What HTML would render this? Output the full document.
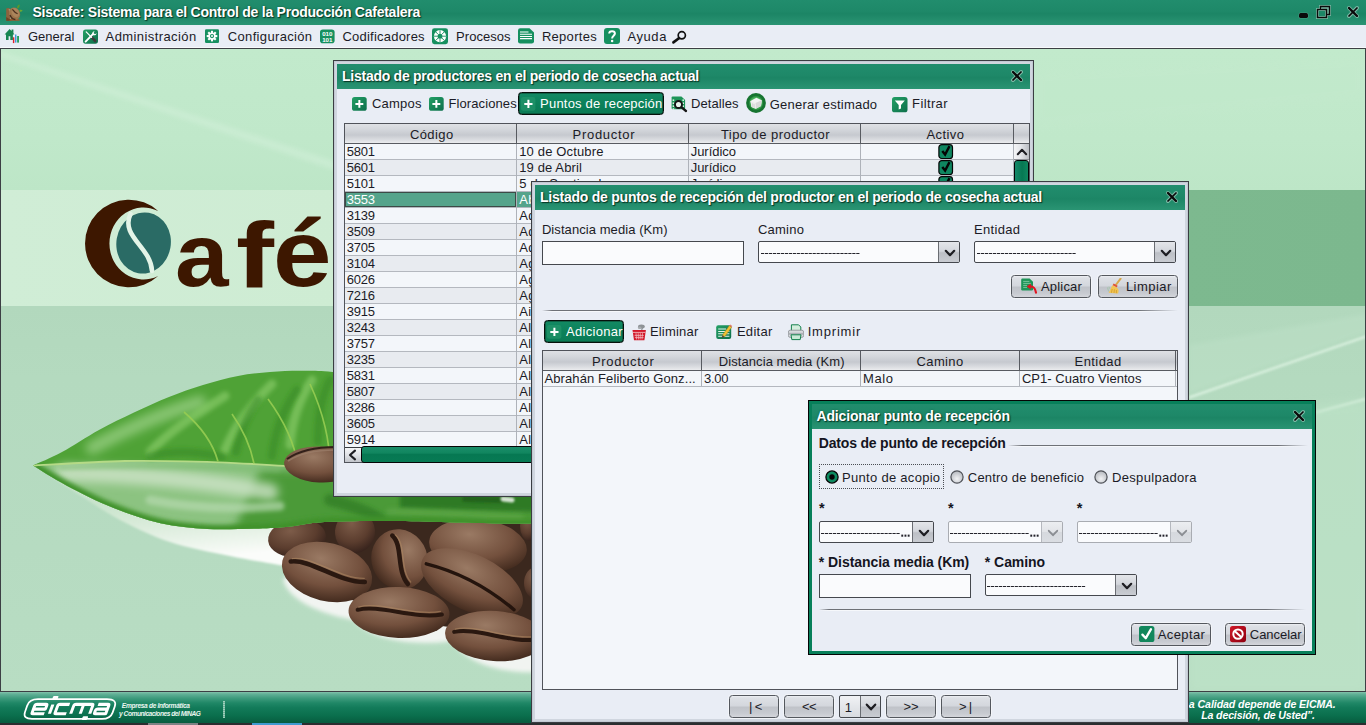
<!DOCTYPE html><html><head><meta charset="utf-8"><title>Siscafe</title><style>
*{box-sizing:border-box;margin:0;padding:0}
html,body{width:1366px;height:725px;overflow:hidden;background:#bfe6c8;font-family:"Liberation Sans",sans-serif}
.t{position:absolute;white-space:pre;line-height:1;font-family:"Liberation Sans",sans-serif}
.abs{position:absolute}
.tb{background:linear-gradient(#218d6d 0%,#1e8868 45%,#1c8565 55%,#2a9473 100%)}
.btn{position:absolute;border:1px solid #54585e;border-radius:3.5px;background:linear-gradient(#eef0f3 0,#dde0e5 9%,#d4d7dd 46%,#c0c3c9 54%,#c7cad0 82%,#d4d6db 100%);box-shadow:0 0 0 1px rgba(255,255,255,.45)}
.hdr{position:absolute;background:linear-gradient(#dfe1e5 0%,#d3d6db 30%,#c6c9cf 58%,#dcdee2 85%,#ebecee 100%)}
.cmb{position:absolute;border:1px solid #45484e;background:#fafbfd;border-radius:2px;overflow:hidden}
.cmb .ar{position:absolute;right:0;top:0;bottom:0;width:21px;border-left:1px solid #6a6d73;background:linear-gradient(#e4e6ea 0%,#d3d6dc 46%,#bcbfc5 54%,#c9ccd2 100%)}
.cmb.dis{border-color:#a9acb2}
.cmb.dis .ar{border-left-color:#b5b8be;background:linear-gradient(#eceef1 0%,#e2e4e8 48%,#d6d9de 52%,#dadde2 100%)}
.inp{position:absolute;border:1px solid #45484e;background:#fafbfd}
</style></head><body>
<div class="abs" style="left:0;top:49px;width:1366px;height:643px;overflow:hidden;background:linear-gradient(#c2eacc 0px,#c0e8ca 90px,#bde6c7 141px,#bbe4c5 141px,#bbe4c5 257px,#b2d8bd 257px,#b4dabf 330px,#b6dbc1 500px,#b8ddc3 643px)">
<div class="abs" style="left:0;top:141px;width:1366px;height:116px;background:linear-gradient(90deg,#d0edd6 0,#ceecd3 340px,#7db98f 1180px,#7cb88e 100%)"></div>
<svg class="abs" style="left:0;top:0" width="1366" height="643" viewBox="0 49 1366 643"><defs><linearGradient id="lf" x1="0" y1="0" x2="0" y2="1"><stop offset="0" stop-color="#2f7d25"/><stop offset=".45" stop-color="#4d9c38"/><stop offset=".55" stop-color="#86c072"/><stop offset="1" stop-color="#4f9b3c"/></linearGradient><linearGradient id="lf2" x1="0" y1="0" x2="1" y2="0"><stop offset="0" stop-color="#8cc47c"/><stop offset=".5" stop-color="#5aa546"/><stop offset="1" stop-color="#2f7a26"/></linearGradient><filter id="bl" filterUnits="userSpaceOnUse" x="0" y="49" width="1366" height="643"><feGaussianBlur stdDeviation="5"/></filter><filter id="bl2" filterUnits="userSpaceOnUse" x="0" y="49" width="1366" height="643"><feGaussianBlur stdDeviation="2.2"/></filter><filter id="bl1" filterUnits="userSpaceOnUse" x="0" y="49" width="1366" height="643"><feGaussianBlur stdDeviation="1"/></filter></defs><path d="M0,51 L340,163 L340,172 L0,57Z" fill="#d3f0da" opacity=".5" filter="url(#bl2)"/><path d="M1034,70 L1366,55 L1366,100 L1034,130Z" fill="#c4e9cd" opacity=".3" filter="url(#bl)"/><path d="M1189,396 L1366,335 L1366,338 L1189,399Z" fill="#dcf2e1" opacity=".85" filter="url(#bl1)"/><path d="M1189,345 L1366,314 L1366,333 L1189,393Z" fill="#bde0c7" opacity=".5" filter="url(#bl2)"/><path d="M1316,411 L1366,397.5 L1366,400.5 L1316,414Z" fill="#dcf2e1" opacity=".75" filter="url(#bl1)"/><path d="M1189,420 L1366,400 L1366,692 L1189,692Z" fill="#bfe5c9" opacity=".5" filter="url(#bl)"/>
<g><path d="M158.2,211 A43.8,43.8 0 1 0 158.2,276 A34.1,36 0 1 1 158.2,211Z" fill="#3d1700"/><ellipse cx="143.6" cy="243" rx="27.2" ry="30.6" fill="#2a6b65" transform="rotate(10 143.6 243)"/><path d="M130.5,214 C120,236 151,247 152,271" fill="none" stroke="#e3f4e7" stroke-width="4.6" stroke-linecap="round"/></g>
<defs><linearGradient id="shg" x1="0" y1="0" x2=".25" y2="1"><stop offset=".35" stop-color="#dfeeda" stop-opacity=".5"/><stop offset="1" stop-color="#fbfcfa"/></linearGradient></defs>
<path d="M50.0,476.0 C54.2,478.7 63.3,484.7 75.0,492.0 C86.7,499.3 104.2,511.7 120.0,520.0 C135.8,528.3 151.7,536.0 170.0,542.0 C188.3,548.0 210.8,552.0 230.0,556.0 C249.2,560.0 275.8,564.3 285.0,566.0 L300,566 L300,520 L120,500Z" fill="url(#shg)" filter="url(#bl1)"/>
<path d="M283,580 C290,604 330,616 354,620 C372,642 420,646 452,641 C470,668 510,674 545,672 L545,560 L300,560Z" fill="#f5f6f4" opacity=".95" filter="url(#bl2)"/>
<path d="M290,522 L545,516 L545,640 L470,630 L400,620 L340,595 L300,575 L285,548Z" fill="#3b281e"/>
<g transform="translate(297,538) rotate(-6)"><defs><radialGradient id="b297538" cx=".4" cy=".3" r=".75"><stop offset="0" stop-color="#7d5c49"/><stop offset=".6" stop-color="#5b3d2e"/><stop offset="1" stop-color="#33201a"/></radialGradient></defs><ellipse rx="29" ry="19" fill="url(#b297538)"/></g>
<g transform="translate(355,532) rotate(5)"><defs><radialGradient id="b355532" cx=".4" cy=".3" r=".75"><stop offset="0" stop-color="#7d5c49"/><stop offset=".6" stop-color="#5b3d2e"/><stop offset="1" stop-color="#33201a"/></radialGradient></defs><ellipse rx="20" ry="21" fill="url(#b355532)"/></g>
<g transform="translate(478,546) rotate(6)"><defs><radialGradient id="b478546" cx=".4" cy=".3" r=".75"><stop offset="0" stop-color="#9a7a64"/><stop offset=".6" stop-color="#73503d"/><stop offset="1" stop-color="#3e271b"/></radialGradient></defs><ellipse rx="49" ry="27" fill="url(#b478546)"/></g>
<g transform="translate(529,526) rotate(0)"><defs><radialGradient id="b529526" cx=".4" cy=".3" r=".75"><stop offset="0" stop-color="#7d5c49"/><stop offset=".6" stop-color="#5b3d2e"/><stop offset="1" stop-color="#33201a"/></radialGradient></defs><ellipse rx="9" ry="15" fill="url(#b529526)"/></g>
<g transform="translate(536,583) rotate(0)"><defs><radialGradient id="b536583" cx=".4" cy=".3" r=".75"><stop offset="0" stop-color="#7d5c49"/><stop offset=".6" stop-color="#5b3d2e"/><stop offset="1" stop-color="#33201a"/></radialGradient></defs><ellipse rx="12" ry="16" fill="url(#b536583)"/></g>
<defs><clipPath id="lc"><path d="M33.0,465.6 C37.8,463.3 51.0,457.9 62.0,452.0 C73.0,446.1 87.0,436.6 99.0,430.0 C111.0,423.4 122.3,418.0 134.0,412.5 C145.7,407.0 157.5,401.6 169.0,397.0 C180.5,392.4 191.5,388.5 203.0,385.0 C214.5,381.5 226.8,378.2 238.0,376.0 C249.2,373.8 259.7,372.9 270.0,372.0 C280.3,371.1 289.6,370.8 300.0,370.8 C310.4,370.8 315.8,370.5 332.5,372.0 C349.2,373.5 364.6,375.3 400.0,380.0 C435.4,384.7 520.8,396.7 545.0,400.0 L545,523  C537.7,523.1 526.3,523.8 501.0,523.5 C475.7,523.2 422.4,521.2 393.0,521.0 C363.6,520.8 342.3,521.0 324.5,522.0 C306.7,523.0 297.8,525.9 286.0,527.0 C274.2,528.1 267.1,528.2 254.0,528.5 C240.9,528.8 223.0,529.9 207.4,529.0 C191.8,528.1 176.1,526.7 160.5,523.2 C144.9,519.7 129.3,514.2 113.7,508.0 C98.1,501.8 80.2,492.8 66.8,485.7 C53.3,478.6 38.6,469.0 33.0,465.6Z"/></clipPath></defs>
<path d="M33.0,465.6 C37.8,463.3 51.0,457.9 62.0,452.0 C73.0,446.1 87.0,436.6 99.0,430.0 C111.0,423.4 122.3,418.0 134.0,412.5 C145.7,407.0 157.5,401.6 169.0,397.0 C180.5,392.4 191.5,388.5 203.0,385.0 C214.5,381.5 226.8,378.2 238.0,376.0 C249.2,373.8 259.7,372.9 270.0,372.0 C280.3,371.1 289.6,370.8 300.0,370.8 C310.4,370.8 315.8,370.5 332.5,372.0 C349.2,373.5 364.6,375.3 400.0,380.0 C435.4,384.7 520.8,396.7 545.0,400.0 L545,523  C537.7,523.1 526.3,523.8 501.0,523.5 C475.7,523.2 422.4,521.2 393.0,521.0 C363.6,520.8 342.3,521.0 324.5,522.0 C306.7,523.0 297.8,525.9 286.0,527.0 C274.2,528.1 267.1,528.2 254.0,528.5 C240.9,528.8 223.0,529.9 207.4,529.0 C191.8,528.1 176.1,526.7 160.5,523.2 C144.9,519.7 129.3,514.2 113.7,508.0 C98.1,501.8 80.2,492.8 66.8,485.7 C53.3,478.6 38.6,469.0 33.0,465.6Z" fill="#4fa236"/>
<g clip-path="url(#lc)"><path d="M33.0,465.6 C48.3,464.8 94.0,461.6 125.0,461.0 C156.0,460.4 192.3,461.5 219.0,462.3 C245.7,463.1 254.8,464.5 285.0,465.8 C315.2,467.1 356.7,470.0 400.0,470.0 C443.3,470.0 520.8,466.7 545.0,466.0 L545,540 L30,540Z" fill="#8cc381"/><path d="M260,470 L545,470 L545,540 L230,540Z" fill="#4c9a38" filter="url(#bl)"/><path d="M400,490 L545,490 L545,512 L400,508Z" fill="#2b7521" opacity=".85" filter="url(#bl2)"/><path d="M64,473 C130,474 200,480 270,492" stroke="#cfe5cb" stroke-width="17" stroke-opacity=".8" fill="none" stroke-linecap="round" filter="url(#bl)"/><path d="M150,500 C190,508 230,510 280,506" stroke="#b5d9ae" stroke-width="9" stroke-opacity=".7" fill="none" stroke-linecap="round" filter="url(#bl2)"/><path d="M60,468 C120,466 200,466 280,470" stroke="#7dba6f" stroke-width="4" stroke-opacity=".6" fill="none" filter="url(#bl2)"/><path d="M330,500 C350,505 370,512 380,520" stroke="#2c7a22" stroke-width="12" stroke-opacity=".7" fill="none" stroke-linecap="round" filter="url(#bl2)"/><path d="M390,512 C430,513 470,515 520,518" stroke="#5fa848" stroke-width="7" stroke-opacity=".7" fill="none" stroke-linecap="round" filter="url(#bl2)"/><path d="M465,499 L500,500" stroke="#1f5f1a" stroke-width="6" stroke-opacity=".8" fill="none" stroke-linecap="round" filter="url(#bl1)"/><path d="M503,499 L512,500" stroke="#e8efe6" stroke-width="5" stroke-opacity=".9" fill="none" stroke-linecap="round" filter="url(#bl1)"/><path d="M545.0,523.0 C537.7,523.1 526.3,523.8 501.0,523.5 C475.7,523.2 422.4,521.2 393.0,521.0 C363.6,520.8 342.3,521.0 324.5,522.0 C306.7,523.0 297.8,525.9 286.0,527.0 C274.2,528.1 267.1,528.2 254.0,528.5 C240.9,528.8 223.0,529.9 207.4,529.0 C191.8,528.1 176.1,526.7 160.5,523.2 C144.9,519.7 129.3,514.2 113.7,508.0 C98.1,501.8 80.2,492.8 66.8,485.7 C53.3,478.6 38.6,469.0 33.0,465.6" stroke="#3f922b" stroke-width="9" fill="none" filter="url(#bl2)"/><path d="M92,448 C125,430 160,414 200,402" stroke="#a7d893" stroke-width="13" stroke-opacity=".65" fill="none" stroke-linecap="round" filter="url(#bl)"/><path d="M150,452 C170,430 200,412 225,396 M225,450 C235,425 255,400 272,384 M290,445 C292,420 300,398 312,380" stroke="#8fd06e" stroke-width="9" stroke-opacity=".6" fill="none" stroke-linecap="round" filter="url(#bl2)"/><path d="M150,456 C175,450 200,452 222,457 M236,452 C240,432 248,414 258,400 M272,456 C275,432 284,408 297,390 M318,442 C318,420 321,396 330,380" stroke="#2f861f" stroke-width="8" stroke-opacity=".5" fill="none" stroke-linecap="round" filter="url(#bl2)"/><path d="M33.0,465.6 C48.3,464.8 94.0,461.6 125.0,461.0 C156.0,460.4 192.3,461.5 219.0,462.3 C245.7,463.1 254.8,464.5 285.0,465.8 C315.2,467.1 356.7,470.0 400.0,470.0 C443.3,470.0 520.8,466.7 545.0,466.0" stroke="#b5da86" stroke-width="1.8" fill="none"/><path d="M218,461.5 C212,440 198,424 184,412 M254,463.5 C250,444 242,428 232,414 M298,466 C294,440 282,418 268,399 M330,468 C330,440 322,410 310,384" stroke="#96cc52" stroke-width="1.7" fill="none" opacity=".9"/></g>
<g transform="translate(320,464.5) rotate(3)"><defs><radialGradient id="b320464" cx=".4" cy=".3" r=".75"><stop offset="0" stop-color="#9a7a64"/><stop offset=".6" stop-color="#73503d"/><stop offset="1" stop-color="#3e271b"/></radialGradient></defs><ellipse rx="36" ry="18" fill="url(#b320464)"/></g>
<path d="M287,459 C300,450 320,446.5 340,447" stroke="#33201a" stroke-width="2" fill="none"/>
<path d="M288,461 C300,453 320,449.5 340,450" stroke="#9a7c68" stroke-width="1.6" fill="none" opacity=".8"/>
<g transform="translate(327,572) rotate(14)"><defs><radialGradient id="b327572" cx=".4" cy=".3" r=".75"><stop offset="0" stop-color="#9a7a64"/><stop offset=".6" stop-color="#73503d"/><stop offset="1" stop-color="#3e271b"/></radialGradient></defs><ellipse rx="46" ry="29" fill="url(#b327572)"/><path d="M-37.72,-1.4500000000000002 C-18.400000000000002,-8.7 13.799999999999999,7.25 39.1,0.58" fill="none" stroke="#2a1810" stroke-width="4.6" stroke-linecap="round"/><path d="M-36.800000000000004,-4.64 C-18.400000000000002,-12.18 13.799999999999999,3.48 37.72,-2.9000000000000004" fill="none" stroke="#b08a62" stroke-opacity=".55" stroke-width="1.3" stroke-linecap="round"/></g>
<g transform="translate(399.5,559.5) rotate(70)"><defs><radialGradient id="b399559" cx=".4" cy=".3" r=".75"><stop offset="0" stop-color="#9a7a64"/><stop offset=".6" stop-color="#73503d"/><stop offset="1" stop-color="#3e271b"/></radialGradient></defs><ellipse rx="30.5" ry="28" fill="url(#b399559)"/><path d="M-25.009999999999998,-1.4000000000000001 C-12.200000000000001,-8.4 9.15,7.0 25.925,0.56" fill="none" stroke="#2a1810" stroke-width="4.5" stroke-linecap="round"/><path d="M-24.400000000000002,-4.48 C-12.200000000000001,-11.76 9.15,3.36 25.009999999999998,-2.8000000000000003" fill="none" stroke="#b08a62" stroke-opacity=".55" stroke-width="1.3" stroke-linecap="round"/></g>
<g transform="translate(472,583) rotate(26)"><defs><radialGradient id="b472583" cx=".4" cy=".3" r=".75"><stop offset="0" stop-color="#9a7a64"/><stop offset=".6" stop-color="#73503d"/><stop offset="1" stop-color="#3e271b"/></radialGradient></defs><ellipse rx="55" ry="28" fill="url(#b472583)"/><path d="M-49.5,2.8000000000000003 C-16.5,-4.2 16.5,-2.8000000000000003 49.5,5.6000000000000005" fill="none" stroke="#24140d" stroke-width="3.4" stroke-linecap="round"/></g>
<g transform="translate(399,612.5) rotate(2)"><defs><radialGradient id="b399612" cx=".4" cy=".3" r=".75"><stop offset="0" stop-color="#9a7a64"/><stop offset=".6" stop-color="#73503d"/><stop offset="1" stop-color="#3e271b"/></radialGradient></defs><ellipse rx="50.5" ry="25.5" fill="url(#b399612)"/><path d="M-41.41,-1.2750000000000001 C-20.200000000000003,-7.6499999999999995 15.149999999999999,6.375 42.925,0.51" fill="none" stroke="#2a1810" stroke-width="4.1" stroke-linecap="round"/><path d="M-40.400000000000006,-4.08 C-20.200000000000003,-10.709999999999999 15.149999999999999,3.06 41.41,-2.5500000000000003" fill="none" stroke="#b08a62" stroke-opacity=".55" stroke-width="1.3" stroke-linecap="round"/></g>
<g transform="translate(495,636) rotate(4)"><defs><radialGradient id="b495636" cx=".4" cy=".3" r=".75"><stop offset="0" stop-color="#9a7a64"/><stop offset=".6" stop-color="#73503d"/><stop offset="1" stop-color="#3e271b"/></radialGradient></defs><ellipse rx="50" ry="25" fill="url(#b495636)"/><path d="M-41.0,-1.25 C-20.0,-7.5 15.0,6.25 42.5,0.5" fill="none" stroke="#2a1810" stroke-width="4.0" stroke-linecap="round"/><path d="M-40.0,-4.0 C-20.0,-10.5 15.0,3.0 41.0,-2.5" fill="none" stroke="#b08a62" stroke-opacity=".55" stroke-width="1.3" stroke-linecap="round"/></g>
</svg>
<div class="abs" style="left:174.5px;top:162.6px;font-family:'Liberation Sans',sans-serif;font-weight:700;font-size:90px;line-height:1;color:#3d1700;white-space:pre;transform-origin:0 0;transform:scale(1.07,0.98)">a</div>
<div class="abs" style="left:235.5px;top:159.6px;font-family:'Liberation Sans',sans-serif;font-weight:700;font-size:90px;line-height:1;color:#3d1700;white-space:pre;transform-origin:0 0;transform:scale(1.27,1.02)">f</div>
<div class="abs" style="left:272.8px;top:157.3px;font-family:'Liberation Sans',sans-serif;font-weight:700;font-size:90px;line-height:1;color:#3d1700;white-space:pre;transform-origin:0 0;transform:scale(1.17,1.05)">é</div>
<div class="abs" style="left:0;top:0;width:1px;height:643px;background:#3c3f44"></div>
<div class="abs" style="left:1365px;top:0;width:1px;height:643px;background:#3c3f44"></div>
<div class="abs" style="left:0;top:642px;width:1366px;height:1px;background:#3c3f44"></div>
</div>
<div class="abs tb" style="left:0;top:0;width:1366px;height:25px">
<svg class="abs" style="left:6px;top:4px" width="17" height="17" viewBox="0 0 17 17"><path d="M0.2,4.6 Q1.6,3.6 3.6,4.2 L5,16.8 H0.2Z" fill="#8d623e"/><path d="M0.2,13 L6,16.8 H0.2Z" fill="#6d4526"/><path d="M3,16.8 L13.6,16.8 L13.6,15.4 L6,14Z" fill="#9a5a30"/><path d="M3.2,5 L4.8,15" stroke="#cdb59c" stroke-width="1" opacity=".7"/><ellipse cx="8.6" cy="9.6" rx="5.3" ry="6.4" transform="rotate(-28 8.6 9.6)" fill="#9c744b"/><ellipse cx="9.4" cy="8.6" rx="3.6" ry="4.8" transform="rotate(-28 9.4 8.6)" fill="#b08a60" opacity=".75"/><path d="M4,11 C5,13.5 7,15.4 9.4,15.6" stroke="#4a2e1c" stroke-width="1.5" fill="none"/><path d="M6.4,5.4 C8,7.6 9.8,9 11.6,9.8" stroke="#4a2e1c" stroke-width="1.2" fill="none"/><path d="M11,3.8 C11.2,1.6 12.4,0.6 13.8,0.6 C13.8,2.4 13,3.8 11.8,4.8Z" fill="#5a9a2a"/><path d="M13.4,6.4 C14.4,5.6 15.6,5.8 16.6,6.4 C15.8,7.6 14.6,8 13.6,7.8Z" fill="#6aa832"/></svg>
<span class="t" style="left:32.45px;top:4.95px;font-size:14px;color:#fff;font-weight:700;letter-spacing:-0.243px;text-shadow:1px 1px 1px rgba(0,40,25,.85),0 0 2px rgba(0,50,30,.5);">Siscafe: Sistema para el Control de la Producción Cafetalera</span>
<div class="abs" style="left:1299px;top:13.4px;width:9.4px;height:4.4px;background:#0a0a0a;border-radius:1.5px;box-shadow:0 0 1px #cfe6dc"></div>
<svg class="abs" style="left:1316px;top:4px" width="16" height="16" viewBox="0 0 16 16"><path d="M4.5,5.5 V2.5 H13.5 V10.5 H10.5" fill="none" stroke="#cfe6dc" stroke-opacity=".5" stroke-width="3"/><rect x="1.5" y="5.5" width="9" height="8" fill="none" stroke="#cfe6dc" stroke-opacity=".5" stroke-width="3"/><path d="M4.5,5.5 V2.5 H13.5 V10.5 H10.5" fill="none" stroke="#0a0a0a" stroke-width="1.4"/><rect x="1.5" y="5.5" width="9" height="8" fill="none" stroke="#0a0a0a" stroke-width="1.4"/></svg>
<svg class="abs" style="left:1345px;top:4px" width="16" height="16" viewBox="-2 -2 16 16"><path d="M1.9,1.9 L10.1,10.1 M10.1,1.9 L1.9,10.1" stroke="#d8ece3" stroke-opacity=".5" stroke-width="3.8" stroke-linecap="round"/><path d="M2,2 L10,10" stroke="#0a0a0a" stroke-width="2.4" stroke-linecap="round"/><path d="M10,2 L2,10" stroke="#0a0a0a" stroke-width="1.7" stroke-linecap="round"/></svg>
</div>
<div class="abs" style="left:0;top:25px;width:1366px;height:23px;background:#e9edf5;border-bottom:1px solid #f8f9fc">
<svg class="abs" style="left:4px;top:3px" width="16" height="16" viewBox="0 0 16 16"><path d="M0.6,6.4 L5.6,1 L7.6,3.1 V1.6 H9.4 V5 L10.4,6.4 H8.9 V12 H6.3 V8.3 H4.6 V12 H2 V6.4Z" fill="#1a8652"/><rect x="8.9" y="9.3" width="1.4" height="5.8" fill="#e0202a"/><rect x="11.1" y="6.5" width="1.3" height="8.1" fill="#2f8fd8"/><rect x="13.1" y="8" width="1.9" height="6.6" fill="#2aa25e"/></svg>
<span class="t" style="left:27.90px;top:4.50px;font-size:13px;color:#1b1b26;letter-spacing:0.042px;">General</span>
<svg class="abs" style="left:83px;top:3px" width="16" height="17" viewBox="0 0 16 17"><defs><linearGradient id="gg" x1="0" y1="0" x2="1" y2="1"><stop offset="0" stop-color="#23a065"/><stop offset="1" stop-color="#0d6f4b"/></linearGradient><linearGradient id="gr" x1="0" y1="0" x2="1" y2="1"><stop offset="0" stop-color="#d01828"/><stop offset="1" stop-color="#8e0010"/></linearGradient></defs><rect x="0" y="1.5" width="15" height="14.2" rx="2.6" fill="url(#gg)"/><path d="M8.2,8.9 L12.2,13" stroke="#3b3b3b" stroke-width="2.6" stroke-linecap="round"/><path d="M3.2,3.9 L8.6,9.3" stroke="#fff" stroke-width="1.2" stroke-linecap="round"/><path d="M2.6,13.6 L9.4,6.6" stroke="#fff" stroke-width="1.9" stroke-linecap="round"/><path d="M9.2,6.8 C8.6,5 9.8,3.3 11.6,3.2 L10.6,4.9 L11.9,6.2 L13.6,5.2 C13.5,7 11.6,8 9.2,6.8Z" fill="#fff"/></svg>
<span class="t" style="left:105.60px;top:4.50px;font-size:13px;color:#1b1b26;letter-spacing:0.410px;">Administración</span>
<svg class="abs" style="left:205px;top:3px" width="16" height="16" viewBox="0 0 16 16"><rect x="0" y="1.3" width="14" height="13.6" rx="1.2" fill="#169060"/><g transform="translate(7,8.1)"><rect x="-1.05" y="-5.3" width="2.1" height="2.4" transform="rotate(0)" fill="#fff"/><rect x="-1.05" y="-5.3" width="2.1" height="2.4" transform="rotate(45)" fill="#fff"/><rect x="-1.05" y="-5.3" width="2.1" height="2.4" transform="rotate(90)" fill="#fff"/><rect x="-1.05" y="-5.3" width="2.1" height="2.4" transform="rotate(135)" fill="#fff"/><rect x="-1.05" y="-5.3" width="2.1" height="2.4" transform="rotate(180)" fill="#fff"/><rect x="-1.05" y="-5.3" width="2.1" height="2.4" transform="rotate(225)" fill="#fff"/><rect x="-1.05" y="-5.3" width="2.1" height="2.4" transform="rotate(270)" fill="#fff"/><rect x="-1.05" y="-5.3" width="2.1" height="2.4" transform="rotate(315)" fill="#fff"/><circle r="3.7" fill="#fff"/><circle r="2.1" fill="#169060"/><circle r="1" fill="#fff"/></g></svg>
<span class="t" style="left:227.80px;top:4.50px;font-size:13px;color:#1b1b26;letter-spacing:0.340px;">Configuración</span>
<svg class="abs" style="left:320.4px;top:3px" width="16" height="16" viewBox="0 0 16 16"><rect x="0" y="1.5" width="14.6" height="13.7" rx="2.8" fill="#169060"/><text x="7.3" y="7.8" font-family="Liberation Sans" font-weight="700" font-size="6.2" fill="#fff" text-anchor="middle">010</text><text x="7.3" y="13.6" font-family="Liberation Sans" font-weight="700" font-size="6.2" fill="#fff" text-anchor="middle">101</text></svg>
<span class="t" style="left:342.50px;top:4.50px;font-size:13px;color:#1b1b26;letter-spacing:0.217px;">Codificadores</span>
<svg class="abs" style="left:432px;top:3px" width="16" height="17" viewBox="0 0 16 17"><rect x="0" y="0.2" width="16" height="16" rx="2.4" fill="#169060"/><g transform="translate(8,8.2)"><circle r="6.1" fill="#fff"/><path d="M0,-2.4 V-6" transform="rotate(0)" stroke="#169060" stroke-width="0.9"/><path d="M0,-2.4 V-6" transform="rotate(45)" stroke="#169060" stroke-width="0.9"/><path d="M0,-2.4 V-6" transform="rotate(90)" stroke="#169060" stroke-width="0.9"/><path d="M0,-2.4 V-6" transform="rotate(135)" stroke="#169060" stroke-width="0.9"/><path d="M0,-2.4 V-6" transform="rotate(180)" stroke="#169060" stroke-width="0.9"/><path d="M0,-2.4 V-6" transform="rotate(225)" stroke="#169060" stroke-width="0.9"/><path d="M0,-2.4 V-6" transform="rotate(270)" stroke="#169060" stroke-width="0.9"/><path d="M0,-2.4 V-6" transform="rotate(315)" stroke="#169060" stroke-width="0.9"/><circle r="2.5" fill="#169060"/></g></svg>
<span class="t" style="left:456.10px;top:4.50px;font-size:13px;color:#1b1b26;letter-spacing:0.028px;">Procesos</span>
<svg class="abs" style="left:518px;top:3px" width="16" height="16" viewBox="0 0 16 16"><path d="M2.2,0.2 H11.5 L16,4.6 V13.2 Q16,15.5 13.7,15.5 H2.2 Q0,15.5 0,13.2 V2.4 Q0,0.2 2.2,0.2Z" fill="#169060"/><path d="M2,4 H10.5 M2,6.2 H14 M2,8.4 H14 M2,10.6 H14" stroke="#fff" stroke-width="1.05"/></svg>
<span class="t" style="left:541.90px;top:4.50px;font-size:13px;color:#1b1b26;letter-spacing:0.293px;">Reportes</span>
<svg class="abs" style="left:604px;top:3px" width="16" height="16" viewBox="0 0 16 16"><rect x="0" y="0" width="16" height="16" rx="3" fill="#169060"/><path d="M5.2,5.6 C5.2,2.4 10.9,2.4 10.9,5.6 C10.9,7.7 8.1,7.8 8.1,10.4" fill="none" stroke="#fff" stroke-width="2"/><circle cx="8.1" cy="13" r="1.25" fill="#fff"/></svg>
<span class="t" style="left:627.50px;top:4.50px;font-size:13px;color:#1b1b26;letter-spacing:0.565px;">Ayuda</span>
<svg class="abs" style="left:671px;top:3px" width="17" height="17" viewBox="0 0 17 17"><circle cx="10.8" cy="7.3" r="3.6" fill="none" stroke="#111" stroke-width="1.7"/><path d="M7.9,10.2 L2.4,14.4" stroke="#111" stroke-width="2.6" stroke-linecap="round"/></svg>
</div>
<div class="abs" style="left:0;top:48px;width:1366px;height:1px;background:#3c3f44"></div>
<div class="abs" style="left:0;top:692px;width:1366px;height:33px;overflow:hidden;background:linear-gradient(#84c2ab 0px,#62b197 2px,#409c7e 6px,#1f8766 11px,#127a59 16px,#0a6e4c 24px,#075c3f 31px)">
<svg class="abs" style="left:20px;top:3px" width="100" height="28" viewBox="20 695 100 28"><path d="M38,699.2 H107 Q117.3,699.2 114.8,706.4 L112.6,712.6 Q110.4,718.9 102,718.9 H32 Q22.6,718.9 25,712 L27.2,705.6 Q29.4,699.2 38,699.2Z" fill="none" stroke="#fff" stroke-width="1.7"/><g transform="translate(34.2,702.9) skewX(-20)" fill="none" stroke="#fff" stroke-width="3.1" stroke-linejoin="round"><path d="M14,10.9 H3 Q1.5,10.9 1.5,9.4 V3 Q1.5,1.5 3,1.5 H12 Q13.5,1.5 13.5,3 V6.2 H1.5"/><path d="M19.2,1.5 V10.9"/><path d="M36,1.5 H26 Q24.5,1.5 24.5,3 V9.4 Q24.5,10.9 26,10.9 H36"/><path d="M40.5,10.9 V3 Q40.5,1.5 42,1.5 H58 Q59.5,1.5 59.5,3 V10.9 M50,1.5 V10.9"/><path d="M64.5,1.5 H74 Q75.5,1.5 75.5,3 V10.9 H65.5 Q64,10.9 64,9.4 V7.7 Q64,6.2 65.5,6.2 H75.5"/><rect x="17.4" y="-6.2" width="3.8" height="2" stroke-width="1.6" fill="#fff"/><rect x="54.4" y="14.2" width="3.8" height="2" stroke-width="1.6" fill="#fff"/></g></svg>
<span class="t" style="left:121.84px;top:11.01px;font-size:6.6px;color:#eaf6f0;font-weight:700;font-style:italic;letter-spacing:-0.317px;">Empresa de Informática</span>
<span class="t" style="left:119.04px;top:18.61px;font-size:6.6px;color:#eaf6f0;font-weight:700;font-style:italic;letter-spacing:-0.461px;">y Comunicaciones del MINAG</span>
<div class="abs" style="left:223.3px;top:9px;width:2px;height:17px;background:repeating-linear-gradient(#b5dccb 0,#b5dccb 1px,#7fbba4 1px,#7fbba4 2px);opacity:.85"></div>
<span class="t" style="left:1188.83px;top:6.63px;font-size:10.6px;color:#fff;font-weight:700;font-style:italic;letter-spacing:-0.077px;">a Calidad depende de EICMA.</span>
<span class="t" style="left:1201.23px;top:18.43px;font-size:10.6px;color:#fff;font-weight:700;font-style:italic;letter-spacing:-0.151px;">La decisión, de Usted”.</span>
<div class="abs" style="left:0;top:31.4px;width:1366px;height:1.6px;background:#2b2e30"></div>
<div class="abs" style="left:148px;top:31.4px;width:50px;height:1.6px;background:#7d8284"></div>
<div class="abs" style="left:252px;top:31.4px;width:50px;height:1.6px;background:#3f9bd0"></div>
</div>
<div class="abs" style="left:333px;top:60px;width:701px;height:437px;background:#d0d6df;border:1px solid #3a3d42;overflow:hidden;box-shadow:inset 1px 1px 0 #c3c9d3, inset -1px -1px 0 #c3c9d3">
<div style="position:absolute;left:3px;top:3px;width:693px;height:25px;"></div>
<div class="abs tb" style="left:3px;top:3px;width:693px;height:25px"></div>
<span class="t" style="left:8.05px;top:8.05px;font-size:14px;color:#fff;font-weight:700;letter-spacing:-0.262px;text-shadow:1px 1px 1px rgba(0,40,25,.85),0 0 2px rgba(0,50,30,.5);">Listado de productores en el periodo de cosecha actual</span>
<svg class="abs" style="left:675px;top:7px" width="16" height="16" viewBox="-2 -2 16 16"><path d="M1.9,1.9 L10.1,10.1 M10.1,1.9 L1.9,10.1" stroke="#d8ece3" stroke-opacity=".5" stroke-width="3.8" stroke-linecap="round"/><path d="M2,2 L10,10" stroke="#0a0a0a" stroke-width="2.4" stroke-linecap="round"/><path d="M10,2 L2,10" stroke="#0a0a0a" stroke-width="1.7" stroke-linecap="round"/></svg>
<div style="position:absolute;left:3px;top:28px;width:693px;height:404px;background:#e9edf5"></div>
<svg class="abs" style="left:18.30000000000001px;top:36.2px" width="15" height="14" viewBox="0 0 15 14"><defs><linearGradient id="gg" x1="0" y1="0" x2="1" y2="1"><stop offset="0" stop-color="#23a065"/><stop offset="1" stop-color="#0d6f4b"/></linearGradient><linearGradient id="gr" x1="0" y1="0" x2="1" y2="1"><stop offset="0" stop-color="#d01828"/><stop offset="1" stop-color="#8e0010"/></linearGradient></defs><rect x="0" y="0" width="14.7" height="13.8" rx="2.6" fill="url(#gg)"/><path d="M7.35,3 V10.8 M3.4,6.9 H11.3" stroke="#fff" stroke-width="2"/></svg>
<span class="t" style="left:37.90px;top:36.30px;font-size:13px;color:#1b1b26;letter-spacing:0.216px;">Campos</span>
<svg class="abs" style="left:94.5px;top:36.2px" width="15" height="14" viewBox="0 0 15 14"><defs><linearGradient id="gg" x1="0" y1="0" x2="1" y2="1"><stop offset="0" stop-color="#23a065"/><stop offset="1" stop-color="#0d6f4b"/></linearGradient><linearGradient id="gr" x1="0" y1="0" x2="1" y2="1"><stop offset="0" stop-color="#d01828"/><stop offset="1" stop-color="#8e0010"/></linearGradient></defs><rect x="0" y="0" width="14.7" height="13.8" rx="2.6" fill="url(#gg)"/><path d="M7.35,3 V10.8 M3.4,6.9 H11.3" stroke="#fff" stroke-width="2"/></svg>
<span class="t" style="left:114.50px;top:36.30px;font-size:13px;color:#1b1b26;letter-spacing:0.100px;">Floraciones</span>
<div style="position:absolute;left:184px;top:31px;width:146px;height:23px;background:linear-gradient(#138a64,#0c8059 55%,#0a7b55);border:1px solid #06110c;border-radius:3.5px;box-shadow:inset 0 0 0 .5px #0a3a28"></div>
<svg class="abs" style="left:187.20000000000005px;top:36.2px" width="15" height="14" viewBox="0 0 15 14"><rect x="0" y="0" width="14.4" height="13.8" rx="2.4" fill="#2a9a70" opacity=".55"/><path d="M7.4,2.8 V11 M3.3,6.9 H11.5" stroke="#fff" stroke-width="2"/></svg>
<span class="t" style="left:206.10px;top:36.30px;font-size:13px;color:#fff;letter-spacing:0.198px;">Puntos de recepción</span>
<svg class="abs" style="left:337px;top:35px" width="17" height="17" viewBox="0 0 17 17"><path d="M0.6,1.4 Q0.6,0.4 1.6,0.4 H10.4 L14.1,4 V12.3 Q14.1,13.3 13.1,13.3 H1.6 Q0.6,13.3 0.6,12.3Z" fill="#1e9558"/><rect x="1.6" y="3.4" width="1.6" height="1.6" fill="#d9efe3"/><rect x="1.6" y="6.4" width="1.6" height="1.6" fill="#d9efe3"/><rect x="1.6" y="9.4" width="1.6" height="1.6" fill="#d9efe3"/><rect x="1.6" y="12.2" width="1.6" height="1.6" fill="#d9efe3"/><rect x="11.4" y="3.4" width="1.6" height="1.6" fill="#d9efe3"/><rect x="11.4" y="6.4" width="1.6" height="1.6" fill="#d9efe3"/><rect x="11.4" y="9.4" width="1.6" height="1.6" fill="#d9efe3"/><rect x="11.4" y="12.2" width="1.6" height="1.6" fill="#d9efe3"/><circle cx="7.5" cy="8.5" r="3.5" fill="#e8f4ee" stroke="#161616" stroke-width="1.9"/><path d="M10.6,11.4 L15,15" stroke="#161616" stroke-width="2.3" stroke-linecap="round"/></svg>
<span class="t" style="left:357.10px;top:36.30px;font-size:13px;color:#1b1b26;letter-spacing:0.062px;">Detalles</span>
<svg class="abs" style="left:412.20000000000005px;top:32px" width="20" height="20" viewBox="0 0 20 20"><defs><radialGradient id="gc" cx=".5" cy=".5" r=".5"><stop offset="0" stop-color="#6fd07a"/><stop offset=".72" stop-color="#46b058"/><stop offset="1" stop-color="#167430"/></radialGradient></defs><circle cx="10" cy="10" r="9.9" fill="#167430"/><circle cx="10" cy="10" r="7.6" fill="url(#gc)"/><path d="M4.4,8 L10.4,4.8 L15.8,7.2 L15,13 L9.8,15.8 L5.6,14Z" fill="#f4f4f4"/><path d="M9.4,10 L15.8,7.2 L15,13 L9.8,15.8Z" fill="#d9d9d9"/><path d="M4.4,8 L9.4,10 L9.8,15.8 L5.6,14Z" fill="#ececec"/><path d="M6.6,10.4 L6.8,14 M8,11 L8.2,14.8" stroke="#c4c4c4" stroke-width=".6"/></svg>
<span class="t" style="left:435.80px;top:36.90px;font-size:13px;color:#1b1b26;letter-spacing:0.216px;">Generar estimado</span>
<svg class="abs" style="left:558px;top:35.7px" width="16" height="16" viewBox="0 0 16 16"><defs><linearGradient id="gg" x1="0" y1="0" x2="1" y2="1"><stop offset="0" stop-color="#23a065"/><stop offset="1" stop-color="#0d6f4b"/></linearGradient><linearGradient id="gr" x1="0" y1="0" x2="1" y2="1"><stop offset="0" stop-color="#d01828"/><stop offset="1" stop-color="#8e0010"/></linearGradient></defs><rect x="0" y="0" width="15.5" height="15.3" rx="2.6" fill="url(#gg)"/><path d="M2.8,3.6 H12.8 L9,8 V11.6 L6.7,12.4 V8Z" fill="#fff"/></svg>
<span class="t" style="left:578.10px;top:36.30px;font-size:13px;color:#1b1b26;letter-spacing:0.364px;">Filtrar</span>
<div style="position:absolute;left:10px;top:62px;width:686px;height:340px;border:1px solid #50535a;background:#f3f6fa"></div>
<div class="hdr" style="left:11px;top:63px;width:684px;height:19px"></div><div style="position:absolute;left:182px;top:63px;width:1px;height:19px;background:#585b61"></div><div style="position:absolute;left:354px;top:63px;width:1px;height:19px;background:#585b61"></div><div style="position:absolute;left:526px;top:63px;width:1px;height:19px;background:#585b61"></div><div style="position:absolute;left:679px;top:63px;width:1px;height:19px;background:#585b61"></div><span class="t" style="left:75.90px;top:67.20px;font-size:13px;color:#1b1b26;letter-spacing:0.419px;">Código</span><span class="t" style="left:238.60px;top:67.20px;font-size:13px;color:#1b1b26;letter-spacing:0.703px;">Productor</span><span class="t" style="left:386.90px;top:67.20px;font-size:13px;color:#1b1b26;letter-spacing:0.455px;">Tipo de productor</span><span class="t" style="left:592.50px;top:67.20px;font-size:13px;color:#1b1b26;letter-spacing:0.419px;">Activo</span>
<div style="position:absolute;left:11px;top:82px;width:684px;height:1px;background:#585b61"></div>
<div style="position:absolute;left:11px;top:83px;width:668px;height:15px;background:#f3f6fa"></div>
<div style="position:absolute;left:11px;top:98px;width:668px;height:1px;background:#b4b8bf"></div>
<span class="t" style="left:12.80px;top:83.80px;font-size:13px;color:#1b1b26;letter-spacing:-0.207px;">5801</span>
<span class="t" style="left:185.20px;top:83.80px;font-size:13px;color:#1b1b26;letter-spacing:0.159px;">10 de Octubre</span>
<span class="t" style="left:356.70px;top:83.80px;font-size:13px;color:#1b1b26;letter-spacing:-0.033px;">Jurídico</span>
<svg class="abs" style="left:604px;top:83px" width="16" height="16" viewBox="0 0 16 16"><rect x="0.9" y="0.7" width="13.6" height="13.8" rx="2.8" fill="#0f8660" stroke="#050505" stroke-width="1.2"/><path d="M4.3,7 L7.1,10.5 L11.5,2.1" fill="none" stroke="#050505" stroke-width="2.4" stroke-linejoin="miter"/></svg>
<div style="position:absolute;left:11px;top:99px;width:668px;height:15px;background:#e8ebf0"></div>
<div style="position:absolute;left:11px;top:114px;width:668px;height:1px;background:#b4b8bf"></div>
<span class="t" style="left:12.80px;top:99.80px;font-size:13px;color:#1b1b26;letter-spacing:-0.207px;">5601</span>
<span class="t" style="left:185.20px;top:99.80px;font-size:13px;color:#1b1b26;letter-spacing:0.126px;">19 de Abril</span>
<span class="t" style="left:356.70px;top:99.80px;font-size:13px;color:#1b1b26;letter-spacing:-0.033px;">Jurídico</span>
<svg class="abs" style="left:604px;top:99px" width="16" height="16" viewBox="0 0 16 16"><rect x="0.9" y="0.7" width="13.6" height="13.8" rx="2.8" fill="#0f8660" stroke="#050505" stroke-width="1.2"/><path d="M4.3,7 L7.1,10.5 L11.5,2.1" fill="none" stroke="#050505" stroke-width="2.4" stroke-linejoin="miter"/></svg>
<div style="position:absolute;left:11px;top:115px;width:668px;height:15px;background:#f3f6fa"></div>
<div style="position:absolute;left:11px;top:130px;width:668px;height:1px;background:#b4b8bf"></div>
<span class="t" style="left:12.80px;top:115.80px;font-size:13px;color:#1b1b26;letter-spacing:-0.207px;">5101</span>
<span class="t" style="left:185.20px;top:115.80px;font-size:13px;color:#1b1b26;letter-spacing:0.221px;">5 de Septiembre</span>
<span class="t" style="left:356.70px;top:115.80px;font-size:13px;color:#1b1b26;letter-spacing:-0.033px;">Jurídico</span>
<svg class="abs" style="left:604px;top:115px" width="16" height="16" viewBox="0 0 16 16"><rect x="0.9" y="0.7" width="13.6" height="13.8" rx="2.8" fill="#0f8660" stroke="#050505" stroke-width="1.2"/><path d="M4.3,7 L7.1,10.5 L11.5,2.1" fill="none" stroke="#050505" stroke-width="2.4" stroke-linejoin="miter"/></svg>
<div style="position:absolute;left:11px;top:131px;width:668px;height:15px;background:#55a48b"></div>
<div style="position:absolute;left:11px;top:131px;width:171px;height:15px;border:1px solid #3c4a46;background:#55a48b"></div>
<div style="position:absolute;left:11px;top:146px;width:668px;height:1px;background:#b4b8bf"></div>
<span class="t" style="left:12.80px;top:131.80px;font-size:13px;color:#fff;letter-spacing:-0.207px;">3553</span>
<span class="t" style="left:185.20px;top:131.80px;font-size:13px;color:#fff;letter-spacing:.45px;">Abrahán Feliberto González</span>
<div style="position:absolute;left:11px;top:147px;width:668px;height:15px;background:#f3f6fa"></div>
<div style="position:absolute;left:11px;top:162px;width:668px;height:1px;background:#b4b8bf"></div>
<span class="t" style="left:12.80px;top:147.80px;font-size:13px;color:#1b1b26;letter-spacing:-0.207px;">3139</span>
<span class="t" style="left:185.20px;top:147.80px;font-size:13px;color:#1b1b26;letter-spacing:.45px;">Adalberto Pérez</span>
<div style="position:absolute;left:11px;top:163px;width:668px;height:15px;background:#e8ebf0"></div>
<div style="position:absolute;left:11px;top:178px;width:668px;height:1px;background:#b4b8bf"></div>
<span class="t" style="left:12.80px;top:163.80px;font-size:13px;color:#1b1b26;letter-spacing:-0.207px;">3509</span>
<span class="t" style="left:185.20px;top:163.80px;font-size:13px;color:#1b1b26;letter-spacing:.45px;">Adela Ramos</span>
<div style="position:absolute;left:11px;top:179px;width:668px;height:15px;background:#f3f6fa"></div>
<div style="position:absolute;left:11px;top:194px;width:668px;height:1px;background:#b4b8bf"></div>
<span class="t" style="left:12.80px;top:179.80px;font-size:13px;color:#1b1b26;letter-spacing:-0.207px;">3705</span>
<span class="t" style="left:185.20px;top:179.80px;font-size:13px;color:#1b1b26;letter-spacing:.45px;">Adolfo Cruz</span>
<div style="position:absolute;left:11px;top:195px;width:668px;height:15px;background:#e8ebf0"></div>
<div style="position:absolute;left:11px;top:210px;width:668px;height:1px;background:#b4b8bf"></div>
<span class="t" style="left:12.80px;top:195.80px;font-size:13px;color:#1b1b26;letter-spacing:-0.207px;">3104</span>
<span class="t" style="left:185.20px;top:195.80px;font-size:13px;color:#1b1b26;letter-spacing:.45px;">Agustín Leyva</span>
<div style="position:absolute;left:11px;top:211px;width:668px;height:15px;background:#f3f6fa"></div>
<div style="position:absolute;left:11px;top:226px;width:668px;height:1px;background:#b4b8bf"></div>
<span class="t" style="left:12.80px;top:211.80px;font-size:13px;color:#1b1b26;letter-spacing:-0.207px;">6026</span>
<span class="t" style="left:185.20px;top:211.80px;font-size:13px;color:#1b1b26;letter-spacing:.45px;">Aguedo Mora</span>
<div style="position:absolute;left:11px;top:227px;width:668px;height:15px;background:#e8ebf0"></div>
<div style="position:absolute;left:11px;top:242px;width:668px;height:1px;background:#b4b8bf"></div>
<span class="t" style="left:12.80px;top:227.80px;font-size:13px;color:#1b1b26;letter-spacing:-0.207px;">7216</span>
<span class="t" style="left:185.20px;top:227.80px;font-size:13px;color:#1b1b26;letter-spacing:.45px;">Agripino Sosa</span>
<div style="position:absolute;left:11px;top:243px;width:668px;height:15px;background:#f3f6fa"></div>
<div style="position:absolute;left:11px;top:258px;width:668px;height:1px;background:#b4b8bf"></div>
<span class="t" style="left:12.80px;top:243.80px;font-size:13px;color:#1b1b26;letter-spacing:-0.207px;">3915</span>
<span class="t" style="left:185.20px;top:243.80px;font-size:13px;color:#1b1b26;letter-spacing:.45px;">Aida Ramírez</span>
<div style="position:absolute;left:11px;top:259px;width:668px;height:15px;background:#e8ebf0"></div>
<div style="position:absolute;left:11px;top:274px;width:668px;height:1px;background:#b4b8bf"></div>
<span class="t" style="left:12.80px;top:259.80px;font-size:13px;color:#1b1b26;letter-spacing:-0.207px;">3243</span>
<span class="t" style="left:185.20px;top:259.80px;font-size:13px;color:#1b1b26;letter-spacing:.45px;">Alberto Díaz</span>
<div style="position:absolute;left:11px;top:275px;width:668px;height:15px;background:#f3f6fa"></div>
<div style="position:absolute;left:11px;top:290px;width:668px;height:1px;background:#b4b8bf"></div>
<span class="t" style="left:12.80px;top:275.80px;font-size:13px;color:#1b1b26;letter-spacing:-0.207px;">3757</span>
<span class="t" style="left:185.20px;top:275.80px;font-size:13px;color:#1b1b26;letter-spacing:.45px;">Alcides Pupo</span>
<div style="position:absolute;left:11px;top:291px;width:668px;height:15px;background:#e8ebf0"></div>
<div style="position:absolute;left:11px;top:306px;width:668px;height:1px;background:#b4b8bf"></div>
<span class="t" style="left:12.80px;top:291.80px;font-size:13px;color:#1b1b26;letter-spacing:-0.207px;">3235</span>
<span class="t" style="left:185.20px;top:291.80px;font-size:13px;color:#1b1b26;letter-spacing:.45px;">Aldo Rojas</span>
<div style="position:absolute;left:11px;top:307px;width:668px;height:15px;background:#f3f6fa"></div>
<div style="position:absolute;left:11px;top:322px;width:668px;height:1px;background:#b4b8bf"></div>
<span class="t" style="left:12.80px;top:307.80px;font-size:13px;color:#1b1b26;letter-spacing:-0.207px;">5831</span>
<span class="t" style="left:185.20px;top:307.80px;font-size:13px;color:#1b1b26;letter-spacing:.45px;">Alejandro Mesa</span>
<div style="position:absolute;left:11px;top:323px;width:668px;height:15px;background:#e8ebf0"></div>
<div style="position:absolute;left:11px;top:338px;width:668px;height:1px;background:#b4b8bf"></div>
<span class="t" style="left:12.80px;top:323.80px;font-size:13px;color:#1b1b26;letter-spacing:-0.207px;">5807</span>
<span class="t" style="left:185.20px;top:323.80px;font-size:13px;color:#1b1b26;letter-spacing:.45px;">Alexis Cobas</span>
<div style="position:absolute;left:11px;top:339px;width:668px;height:15px;background:#f3f6fa"></div>
<div style="position:absolute;left:11px;top:354px;width:668px;height:1px;background:#b4b8bf"></div>
<span class="t" style="left:12.80px;top:339.80px;font-size:13px;color:#1b1b26;letter-spacing:-0.207px;">3286</span>
<span class="t" style="left:185.20px;top:339.80px;font-size:13px;color:#1b1b26;letter-spacing:.45px;">Alfredo Ruiz</span>
<div style="position:absolute;left:11px;top:355px;width:668px;height:15px;background:#e8ebf0"></div>
<div style="position:absolute;left:11px;top:370px;width:668px;height:1px;background:#b4b8bf"></div>
<span class="t" style="left:12.80px;top:355.80px;font-size:13px;color:#1b1b26;letter-spacing:-0.207px;">3605</span>
<span class="t" style="left:185.20px;top:355.80px;font-size:13px;color:#1b1b26;letter-spacing:.45px;">Alina Torres</span>
<div style="position:absolute;left:11px;top:371px;width:668px;height:15px;background:#f3f6fa"></div>
<div style="position:absolute;left:11px;top:386px;width:668px;height:1px;background:#b4b8bf"></div>
<span class="t" style="left:12.80px;top:371.80px;font-size:13px;color:#1b1b26;letter-spacing:-0.207px;">5914</span>
<span class="t" style="left:185.20px;top:371.80px;font-size:13px;color:#1b1b26;letter-spacing:.45px;">Alipio Vega</span>
<div style="position:absolute;left:182px;top:83px;width:1px;height:304px;background:#aeb2b9"></div>
<div style="position:absolute;left:354px;top:83px;width:1px;height:304px;background:#aeb2b9"></div>
<div style="position:absolute;left:526px;top:83px;width:1px;height:304px;background:#aeb2b9"></div>
<div style="position:absolute;left:679px;top:83px;width:1px;height:304px;background:#aeb2b9"></div>
<div style="position:absolute;left:680px;top:83px;width:15px;height:304px;background:#e4e7ec"></div>
<div style="position:absolute;left:680px;top:83px;width:15px;height:16px;background:linear-gradient(90deg,#f4f5f7,#e3e5e9 45%,#babdc3);border-bottom:1px solid #8e9197"></div>
<svg class="abs" style="left:679.7px;top:82.69999999999999px" width="16" height="16" viewBox="-8 -8 16 16"><path d="M-4.2,2.2 L0,-2.2 L4.2,2.2" fill="none" stroke="#1d1d22" stroke-width="2" stroke-linecap="round" stroke-linejoin="round"/></svg>
<div style="position:absolute;left:680px;top:99px;width:15px;height:200px;background:linear-gradient(90deg,#15896a,#067852 55%,#0f8760);border:1px solid #050505;border-radius:3px"></div>
<div style="position:absolute;left:11px;top:386px;width:684px;height:1px;background:#3a3d42"></div>
<div style="position:absolute;left:11px;top:387px;width:684px;height:14px;background:#e4e7ec"></div>
<div style="position:absolute;left:11px;top:387px;width:16px;height:14px;background:linear-gradient(#f4f5f7,#e0e2e6 50%,#c2c5cb)"></div>
<svg class="abs" style="left:11px;top:387px" width="16" height="14" viewBox="0 0 16 14"><path d="M10,2.6 L5,7 L10,11.4" fill="none" stroke="#1d1d22" stroke-width="2.1" stroke-linecap="round" stroke-linejoin="round"/></svg>
<div style="position:absolute;left:27px;top:385px;width:600px;height:17px;background:linear-gradient(#1a8d69,#11865f 40%,#067852 50%,#077a54);border:1px solid #050505;border-radius:3px"></div>
</div>
<div class="abs" style="left:531px;top:181px;width:658px;height:542px;background:#d0d6df;border:1px solid #3a3d42;overflow:hidden;box-shadow:inset 1px 1px 0 #c3c9d3, inset -1px -1px 0 #c3c9d3">
<div class="abs tb" style="left:3px;top:3px;width:650px;height:25px"></div>
<span class="t" style="left:8.05px;top:7.95px;font-size:14px;color:#fff;font-weight:700;letter-spacing:-0.243px;text-shadow:1px 1px 1px rgba(0,40,25,.85),0 0 2px rgba(0,50,30,.5);">Listado de puntos de recepción del productor en el periodo de cosecha actual</span>
<svg class="abs" style="left:632px;top:7px" width="16" height="16" viewBox="-2 -2 16 16"><path d="M1.9,1.9 L10.1,10.1 M10.1,1.9 L1.9,10.1" stroke="#d8ece3" stroke-opacity=".5" stroke-width="3.8" stroke-linecap="round"/><path d="M2,2 L10,10" stroke="#0a0a0a" stroke-width="2.4" stroke-linecap="round"/><path d="M10,2 L2,10" stroke="#0a0a0a" stroke-width="1.7" stroke-linecap="round"/></svg>
<div style="position:absolute;left:3px;top:28px;width:650px;height:509px;background:#e9edf5"></div>
<span class="t" style="left:9.90px;top:41.10px;font-size:13px;color:#1b1b26;letter-spacing:0.075px;">Distancia media (Km)</span>
<div class="inp" style="left:10px;top:59px;width:202px;height:24px"></div>
<span class="t" style="left:225.90px;top:41.10px;font-size:13px;color:#1b1b26;letter-spacing:0.261px;">Camino</span>
<div class="cmb" style="left:226px;top:59px;width:202px;height:22px"><div class="ar" style="width:21px"></div></div><svg class="abs" style="left:228.60px;top:70.90px" width="111" height="5"><path d="M0,0.5 H99.20" stroke="#23232b" stroke-width="1.15" stroke-dasharray="3.218 0.75"/></svg><svg class="abs" style="left:409.5px;top:62.5px" width="16" height="16" viewBox="-8 -8 16 16"><path d="M-4.2,-2.2 L0,2.2 L4.2,-2.2" fill="none" stroke="#1d1d22" stroke-width="2.2" stroke-linecap="round" stroke-linejoin="round"/></svg>
<span class="t" style="left:441.90px;top:41.10px;font-size:13px;color:#1b1b26;letter-spacing:0.334px;">Entidad</span>
<div class="cmb" style="left:442px;top:59px;width:202px;height:22px"><div class="ar" style="width:21px"></div></div><svg class="abs" style="left:444.60px;top:70.90px" width="111" height="5"><path d="M0,0.5 H99.40" stroke="#23232b" stroke-width="1.15" stroke-dasharray="3.226 0.75"/></svg><svg class="abs" style="left:625.5px;top:62.5px" width="16" height="16" viewBox="-8 -8 16 16"><path d="M-4.2,-2.2 L0,2.2 L4.2,-2.2" fill="none" stroke="#1d1d22" stroke-width="2.2" stroke-linecap="round" stroke-linejoin="round"/></svg>
<div class="btn" style="left:479px;top:93px;width:80px;height:23px"></div>
<svg class="abs" style="left:489px;top:96px" width="17" height="17" viewBox="0 0 17 17"><path d="M1.4,0.6 H8.6 L12,3.8 V11.2 Q12,12.4 10.8,12.4 H1.4 Q0.2,12.4 0.2,11.2 V1.8 Q0.2,0.6 1.4,0.6Z" fill="#1e9558"/><path d="M2.2,3.4 H8.4 M2.2,5.4 H10 M2.2,7.4 H6 M2.2,9.4 H6" stroke="#bfe6d0" stroke-width=".7" opacity=".8"/><path d="M8.8,8.4 C11.8,8 14.4,10.4 15,14.6" fill="none" stroke="#e01420" stroke-width="2.2" stroke-linecap="round"/><path d="M5.8,8.6 L9.8,5.6 L9.8,11.4Z" fill="#e01420"/></svg>
<span class="t" style="left:508.90px;top:97.90px;font-size:13px;color:#1b1b26;letter-spacing:0.208px;">Aplicar</span>
<div class="btn" style="left:566px;top:93px;width:80px;height:23px"></div>
<svg class="abs" style="left:575px;top:95.5px" width="15" height="16" viewBox="0 0 15 16"><path d="M13.6,0.7 L8.8,7" stroke="#d9a84a" stroke-width="2" stroke-linecap="round"/><path d="M6.6,5.6 L10.6,7.8 L9.8,9.4 L5.6,7.2Z" fill="#e0523a"/><path d="M5.4,7.2 L9.8,9.6 C12,11.4 12,13.6 11,15.4 L1.6,14.8 C3.4,12.6 3.6,9.8 5.4,7.2Z" fill="#f3c552"/><path d="M5.2,11 L4.4,14.8 M7.4,11.4 L7,15 M9.4,12 L9.4,15.2" stroke="#cf9a2c" stroke-width=".8"/><path d="M0.5,9.5 L1.6,13.5 M2,8.6 L2.5,10.6" stroke="#9cc4a4" stroke-width=".8"/></svg>
<span class="t" style="left:593.90px;top:97.90px;font-size:13px;color:#1b1b26;letter-spacing:0.462px;">Limpiar</span>
<div style="position:absolute;left:10px;top:128px;width:636px;height:1px;background:linear-gradient(90deg,transparent,#6e7177 10px,#6e7177 calc(100% - 40px),transparent)"></div><div style="position:absolute;left:10px;top:129px;width:636px;height:1px;background:linear-gradient(90deg,transparent,#f6f8fb 10px,#f6f8fb calc(100% - 40px),transparent)"></div>
<div style="position:absolute;left:12px;top:138px;width:80px;height:23px;background:linear-gradient(#138a64,#0c8059 55%,#0a7b55);border:1px solid #06110c;border-radius:3.5px;box-shadow:inset 0 0 0 .5px #0a3a28"></div>
<svg class="abs" style="left:14.600000000000023px;top:143.2px" width="15" height="14" viewBox="0 0 15 14"><rect x="0" y="0" width="14.4" height="13.8" rx="2.4" fill="#2a9a70" opacity=".55"/><path d="M7.4,2.8 V11 M3.3,6.9 H11.5" stroke="#fff" stroke-width="2"/></svg>
<span class="t" style="left:33.90px;top:142.80px;font-size:13px;color:#fff;letter-spacing:0.325px;">Adicionar</span>
<svg class="abs" style="left:99.5px;top:141.5px" width="15" height="17" viewBox="0 0 15 17"><ellipse cx="9.4" cy="2.6" rx="3.4" ry="2" fill="#8d9296"/><ellipse cx="7.6" cy="3.8" rx="1.8" ry="1.2" fill="#a5aaae"/><path d="M10.6,3.8 L9.6,6" stroke="#8d9296" stroke-width="1.2"/><path d="M0.5,6 H13.9 L12.4,16.2 H2Z" fill="#d2182a"/><path d="M1,8.4 H13.4" stroke="#f6c9cd" stroke-width=".8"/><path d="M4,9.2 L4.5,15.4 M6.2,9.2 L6.4,15.4 M8.3,9.2 L8.1,15.4 M10.5,9.2 L10,15.4 M2.6,11.4 H11.8 M2.9,13.6 H11.5" stroke="#f3bcc2" stroke-width=".75"/></svg>
<span class="t" style="left:117.90px;top:142.80px;font-size:13px;color:#1b1b26;letter-spacing:0.204px;">Eliminar</span>
<svg class="abs" style="left:184px;top:142px" width="17" height="16" viewBox="0 0 17 16"><defs><linearGradient id="gg" x1="0" y1="0" x2="1" y2="1"><stop offset="0" stop-color="#23a065"/><stop offset="1" stop-color="#0d6f4b"/></linearGradient><linearGradient id="gr" x1="0" y1="0" x2="1" y2="1"><stop offset="0" stop-color="#d01828"/><stop offset="1" stop-color="#8e0010"/></linearGradient></defs><rect x="0.2" y="1.2" width="15" height="13.8" rx="2" fill="url(#gg)"/><path d="M2.2,5 H10 M2.2,7.4 H13.4 M2.2,9.8 H13.4 M2.2,12.2 H13.4" stroke="#e3f3ea" stroke-width="1.05"/><path d="M6.4,11.2 L13.4,1.6 L15.6,3.2 L8.6,12.8Z" fill="#f0c132" stroke="#a8801a" stroke-width=".5"/><path d="M6.4,11.2 L8.6,12.8 L5.6,14.2Z" fill="#5a4630"/><path d="M13.4,1.6 L14.2,0.6 L16.2,2.1 L15.6,3.2Z" fill="#e07a6a"/></svg>
<span class="t" style="left:204.90px;top:142.80px;font-size:13px;color:#1b1b26;letter-spacing:0.306px;">Editar</span>
<svg class="abs" style="left:256px;top:141.5px" width="16" height="17" viewBox="0 0 16 17"><path d="M3.4,0.8 H10.6 L12.8,3 V7.4 H3.4Z" fill="#d4eedd" stroke="#16804e" stroke-width="1"/><rect x="0.4" y="6.2" width="15.2" height="7.2" rx="1.8" fill="#d8dadd" stroke="#8a8e93" stroke-width=".8"/><rect x="0.8" y="8.8" width="14.4" height="2" fill="#aeb2b7"/><path d="M3,10.8 H13 L12.2,15.6 H3.8Z" fill="#c9ead6" stroke="#16804e" stroke-width="1"/></svg>
<span class="t" style="left:275.70px;top:142.80px;font-size:13px;color:#1b1b26;letter-spacing:0.809px;">Imprimir</span>
<div style="position:absolute;left:10px;top:168px;width:636px;height:340px;border:1px solid #50535a;background:#f3f6fa"></div>
<div class="hdr" style="left:11px;top:169px;width:634px;height:19px"></div><div style="position:absolute;left:169px;top:169px;width:1px;height:19px;background:#585b61"></div><div style="position:absolute;left:328px;top:169px;width:1px;height:19px;background:#585b61"></div><div style="position:absolute;left:487px;top:169px;width:1px;height:19px;background:#585b61"></div><div style="position:absolute;left:643px;top:169px;width:1px;height:19px;background:#585b61"></div><span class="t" style="left:59.90px;top:173.20px;font-size:13px;color:#1b1b26;letter-spacing:0.703px;">Productor</span><span class="t" style="left:186.80px;top:173.20px;font-size:13px;color:#1b1b26;letter-spacing:0.075px;">Distancia media (Km)</span><span class="t" style="left:384.60px;top:173.20px;font-size:13px;color:#1b1b26;letter-spacing:0.361px;">Camino</span><span class="t" style="left:542.60px;top:173.20px;font-size:13px;color:#1b1b26;letter-spacing:0.418px;">Entidad</span>
<div style="position:absolute;left:11px;top:188px;width:634px;height:1px;background:#585b61"></div>
<div style="position:absolute;left:11px;top:204px;width:634px;height:1px;background:#b4b8bf"></div>
<div style="position:absolute;left:169px;top:189px;width:1px;height:15px;background:#aeb2b9"></div>
<div style="position:absolute;left:328px;top:189px;width:1px;height:15px;background:#aeb2b9"></div>
<div style="position:absolute;left:487px;top:189px;width:1px;height:15px;background:#aeb2b9"></div>
<div style="position:absolute;left:643px;top:189px;width:1px;height:15px;background:#aeb2b9"></div>
<span class="t" style="left:12.50px;top:190.20px;font-size:13px;color:#1b1b26;letter-spacing:0.098px;">Abrahán Feliberto Gonz...</span>
<span class="t" style="left:171.90px;top:190.20px;font-size:13px;color:#1b1b26;letter-spacing:-0.204px;">3.00</span>
<span class="t" style="left:331.10px;top:190.20px;font-size:13px;color:#1b1b26;letter-spacing:0.571px;">Malo</span>
<span class="t" style="left:489.90px;top:190.20px;font-size:13px;color:#1b1b26;letter-spacing:0.028px;">CP1- Cuatro Vientos</span>
<div class="btn" style="left:197px;top:513px;width:50px;height:23px"></div>
<span class="t" style="left:216.90px;top:517.60px;font-size:13px;color:#1b1b26;letter-spacing:2.431px;">|&lt;</span>
<div class="btn" style="left:252px;top:513px;width:50px;height:23px"></div>
<span class="t" style="left:270.10px;top:517.60px;font-size:13px;color:#1b1b26;letter-spacing:-0.687px;">&lt;&lt;</span>
<div class="btn" style="left:354px;top:513px;width:50px;height:23px"></div>
<span class="t" style="left:371.50px;top:517.60px;font-size:13px;color:#1b1b26;letter-spacing:-0.188px;">&gt;&gt;</span>
<div class="btn" style="left:409px;top:513px;width:50px;height:23px"></div>
<span class="t" style="left:426.90px;top:517.60px;font-size:13px;color:#1b1b26;letter-spacing:2.231px;">&gt;|</span>
<div class="cmb" style="left:307px;top:513px;width:42px;height:23px;background:linear-gradient(#f1f2f5,#e4e6ea 50%,#d8dbe0)"><div class="ar" style="width:20px"></div></div>
<span class="t" style="left:312.70px;top:518.60px;font-size:13px;color:#1b1b26;">1</span>
<svg class="abs" style="left:330.6px;top:517.2px" width="16" height="16" viewBox="-8 -8 16 16"><path d="M-4.2,-2.3 L0,2.3 L4.2,-2.3" fill="none" stroke="#1d1d22" stroke-width="2.3" stroke-linecap="round" stroke-linejoin="round"/></svg>
</div>
<div class="abs" style="left:808px;top:400px;width:508px;height:255px;background:#07805a;border:1px solid #050505;overflow:hidden">
<div class="abs tb" style="left:3px;top:3px;width:500px;height:25px"></div>
<span class="t" style="left:7.45px;top:8.25px;font-size:14px;color:#fff;font-weight:700;letter-spacing:-0.148px;text-shadow:1px 1px 1px rgba(0,40,25,.85),0 0 2px rgba(0,50,30,.5);">Adicionar punto de recepción</span>
<svg class="abs" style="left:482px;top:7px" width="16" height="16" viewBox="-2 -2 16 16"><path d="M1.9,1.9 L10.1,10.1 M10.1,1.9 L1.9,10.1" stroke="#d8ece3" stroke-opacity=".5" stroke-width="3.8" stroke-linecap="round"/><path d="M2,2 L10,10" stroke="#0a0a0a" stroke-width="2.4" stroke-linecap="round"/><path d="M10,2 L2,10" stroke="#0a0a0a" stroke-width="1.7" stroke-linecap="round"/></svg>
<div style="position:absolute;left:3px;top:28px;width:500px;height:222px;background:#e9edf5"></div>
<span class="t" style="left:9.85px;top:35.25px;font-size:14px;color:#15151f;font-weight:700;letter-spacing:-0.197px;">Datos de punto de recepción</span>
<div style="position:absolute;left:199px;top:44px;width:300px;height:1px;background:linear-gradient(90deg,transparent,#6e7177 14px,#6e7177 calc(100% - 30px),transparent)"></div>
<div style="position:absolute;left:199px;top:45px;width:300px;height:1px;background:linear-gradient(90deg,transparent,#f6f8fb 14px,#f6f8fb calc(100% - 30px),transparent)"></div>
<div style="position:absolute;left:10px;top:63px;width:125px;height:25px;border:1px dotted #4a4d53"></div>
<svg class="abs" style="left:14.5px;top:68.39999999999998px" width="16" height="16" viewBox="0 0 16 16"><circle cx="8" cy="8" r="6.1" fill="#0c8a60" stroke="#050505" stroke-width="1.3"/><circle cx="8" cy="8" r="2.7" fill="#050505"/></svg>
<span class="t" style="left:33.10px;top:69.90px;font-size:13px;color:#1b1b26;letter-spacing:0.288px;">Punto de acopio</span>
<svg class="abs" style="left:140.29999999999995px;top:68.39999999999998px" width="16" height="16" viewBox="0 0 16 16"><defs><radialGradient id="rg" cx=".5" cy=".65" r=".6"><stop offset="0" stop-color="#f2f3f5"/><stop offset="1" stop-color="#b9bcc2"/></radialGradient></defs><circle cx="8" cy="8" r="6.1" fill="url(#rg)" stroke="#4e5157" stroke-width="1.2"/></svg>
<span class="t" style="left:158.80px;top:69.90px;font-size:13px;color:#1b1b26;letter-spacing:0.197px;">Centro de beneficio</span>
<svg class="abs" style="left:284.4000000000001px;top:68.39999999999998px" width="16" height="16" viewBox="0 0 16 16"><defs><radialGradient id="rg" cx=".5" cy=".65" r=".6"><stop offset="0" stop-color="#f2f3f5"/><stop offset="1" stop-color="#b9bcc2"/></radialGradient></defs><circle cx="8" cy="8" r="6.1" fill="url(#rg)" stroke="#4e5157" stroke-width="1.2"/></svg>
<span class="t" style="left:303.10px;top:69.90px;font-size:13px;color:#1b1b26;letter-spacing:0.304px;">Despulpadora</span>
<span class="t" style="left:10.12px;top:100.43px;font-size:14.5px;color:#15151f;font-weight:700;">*</span>
<span class="t" style="left:139.02px;top:100.43px;font-size:14.5px;color:#15151f;font-weight:700;">*</span>
<span class="t" style="left:267.72px;top:100.43px;font-size:14.5px;color:#15151f;font-weight:700;">*</span>
<div class="cmb" style="left:10px;top:120px;width:115px;height:22px"><div class="ar" style="width:21px"></div></div><svg class="abs" style="left:12.40px;top:131.90px" width="91" height="5"><path d="M0,0.5 H79.40" stroke="#23232b" stroke-width="1.15" stroke-dasharray="3.220 0.75"/><rect x="80.30" y="1.6" width="1.9" height="2.1" fill="#23232b"/><rect x="83.50" y="1.6" width="1.9" height="2.1" fill="#23232b"/><rect x="86.70" y="1.6" width="1.9" height="2.1" fill="#23232b"/></svg><svg class="abs" style="left:106.5px;top:123.5px" width="16" height="16" viewBox="-8 -8 16 16"><path d="M-4.2,-2.2 L0,2.2 L4.2,-2.2" fill="none" stroke="#1d1d22" stroke-width="2.2" stroke-linecap="round" stroke-linejoin="round"/></svg>
<div class="cmb dis" style="left:139px;top:120px;width:115px;height:22px"><div class="ar" style="width:21px"></div></div><svg class="abs" style="left:141.40px;top:131.90px" width="91" height="5"><path d="M0,0.5 H79.40" stroke="#23232b" stroke-width="1.15" stroke-dasharray="3.220 0.75"/><rect x="80.30" y="1.6" width="1.9" height="2.1" fill="#23232b"/><rect x="83.50" y="1.6" width="1.9" height="2.1" fill="#23232b"/><rect x="86.70" y="1.6" width="1.9" height="2.1" fill="#23232b"/></svg><svg class="abs" style="left:235.5px;top:123.5px" width="16" height="16" viewBox="-8 -8 16 16"><path d="M-4.2,-2.2 L0,2.2 L4.2,-2.2" fill="none" stroke="#8a8d92" stroke-width="1.9" stroke-linecap="round" stroke-linejoin="round"/></svg>
<div class="cmb dis" style="left:268px;top:120px;width:115px;height:22px"><div class="ar" style="width:21px"></div></div><svg class="abs" style="left:270.40px;top:131.90px" width="91" height="5"><path d="M0,0.5 H79.40" stroke="#23232b" stroke-width="1.15" stroke-dasharray="3.220 0.75"/><rect x="80.30" y="1.6" width="1.9" height="2.1" fill="#23232b"/><rect x="83.50" y="1.6" width="1.9" height="2.1" fill="#23232b"/><rect x="86.70" y="1.6" width="1.9" height="2.1" fill="#23232b"/></svg><svg class="abs" style="left:364.5px;top:123.5px" width="16" height="16" viewBox="-8 -8 16 16"><path d="M-4.2,-2.2 L0,2.2 L4.2,-2.2" fill="none" stroke="#8a8d92" stroke-width="1.9" stroke-linecap="round" stroke-linejoin="round"/></svg>
<span class="t" style="left:9.85px;top:154.05px;font-size:14px;color:#15151f;font-weight:700;letter-spacing:-0.062px;">* Distancia media (Km)</span>
<div class="inp" style="left:10px;top:173px;width:152px;height:24px"></div>
<span class="t" style="left:175.85px;top:154.05px;font-size:14px;color:#15151f;font-weight:700;letter-spacing:-0.054px;">* Camino</span>
<div class="cmb" style="left:176px;top:173px;width:152px;height:22px"><div class="ar" style="width:21px"></div></div><svg class="abs" style="left:178.40px;top:184.90px" width="111" height="5"><path d="M0,0.5 H98.90" stroke="#23232b" stroke-width="1.15" stroke-dasharray="3.206 0.75"/></svg><svg class="abs" style="left:309.5px;top:176.5px" width="16" height="16" viewBox="-8 -8 16 16"><path d="M-4.2,-2.2 L0,2.2 L4.2,-2.2" fill="none" stroke="#1d1d22" stroke-width="2.2" stroke-linecap="round" stroke-linejoin="round"/></svg>
<div style="position:absolute;left:10px;top:208px;width:487px;height:1px;background:linear-gradient(90deg,transparent,#6e7177 10px,#6e7177 calc(100% - 40px),transparent)"></div><div style="position:absolute;left:10px;top:209px;width:487px;height:1px;background:linear-gradient(90deg,transparent,#f6f8fb 10px,#f6f8fb calc(100% - 40px),transparent)"></div>
<div class="btn" style="left:322px;top:222px;width:80px;height:23px"></div>
<svg class="abs" style="left:329.5999999999999px;top:225px" width="16" height="16" viewBox="0 0 16 16"><rect x="0" y="0" width="15.4" height="16" rx="2.6" fill="#12875c"/><path d="M3.4,8.6 L6.8,12.2 L12,3.2" fill="none" stroke="#fff" stroke-width="2.3" stroke-linecap="round" stroke-linejoin="round"/></svg>
<span class="t" style="left:348.70px;top:226.70px;font-size:13px;color:#1b1b26;letter-spacing:0.398px;">Aceptar</span>
<div class="btn" style="left:416px;top:222px;width:80px;height:23px"></div>
<svg class="abs" style="left:421px;top:224.79999999999995px" width="16" height="17" viewBox="0 0 16 17"><defs><linearGradient id="gg" x1="0" y1="0" x2="1" y2="1"><stop offset="0" stop-color="#23a065"/><stop offset="1" stop-color="#0d6f4b"/></linearGradient><linearGradient id="gr" x1="0" y1="0" x2="1" y2="1"><stop offset="0" stop-color="#d01828"/><stop offset="1" stop-color="#8e0010"/></linearGradient></defs><rect x="0" y="0" width="16" height="16.2" rx="2.6" fill="url(#gr)"/><circle cx="8" cy="8.1" r="4.7" fill="none" stroke="#fff" stroke-width="2"/><path d="M4.6,4.9 L11.4,11.3" stroke="#fff" stroke-width="2"/></svg>
<span class="t" style="left:440.80px;top:226.70px;font-size:13px;color:#1b1b26;letter-spacing:-0.033px;">Cancelar</span>
</div>
</body></html>
